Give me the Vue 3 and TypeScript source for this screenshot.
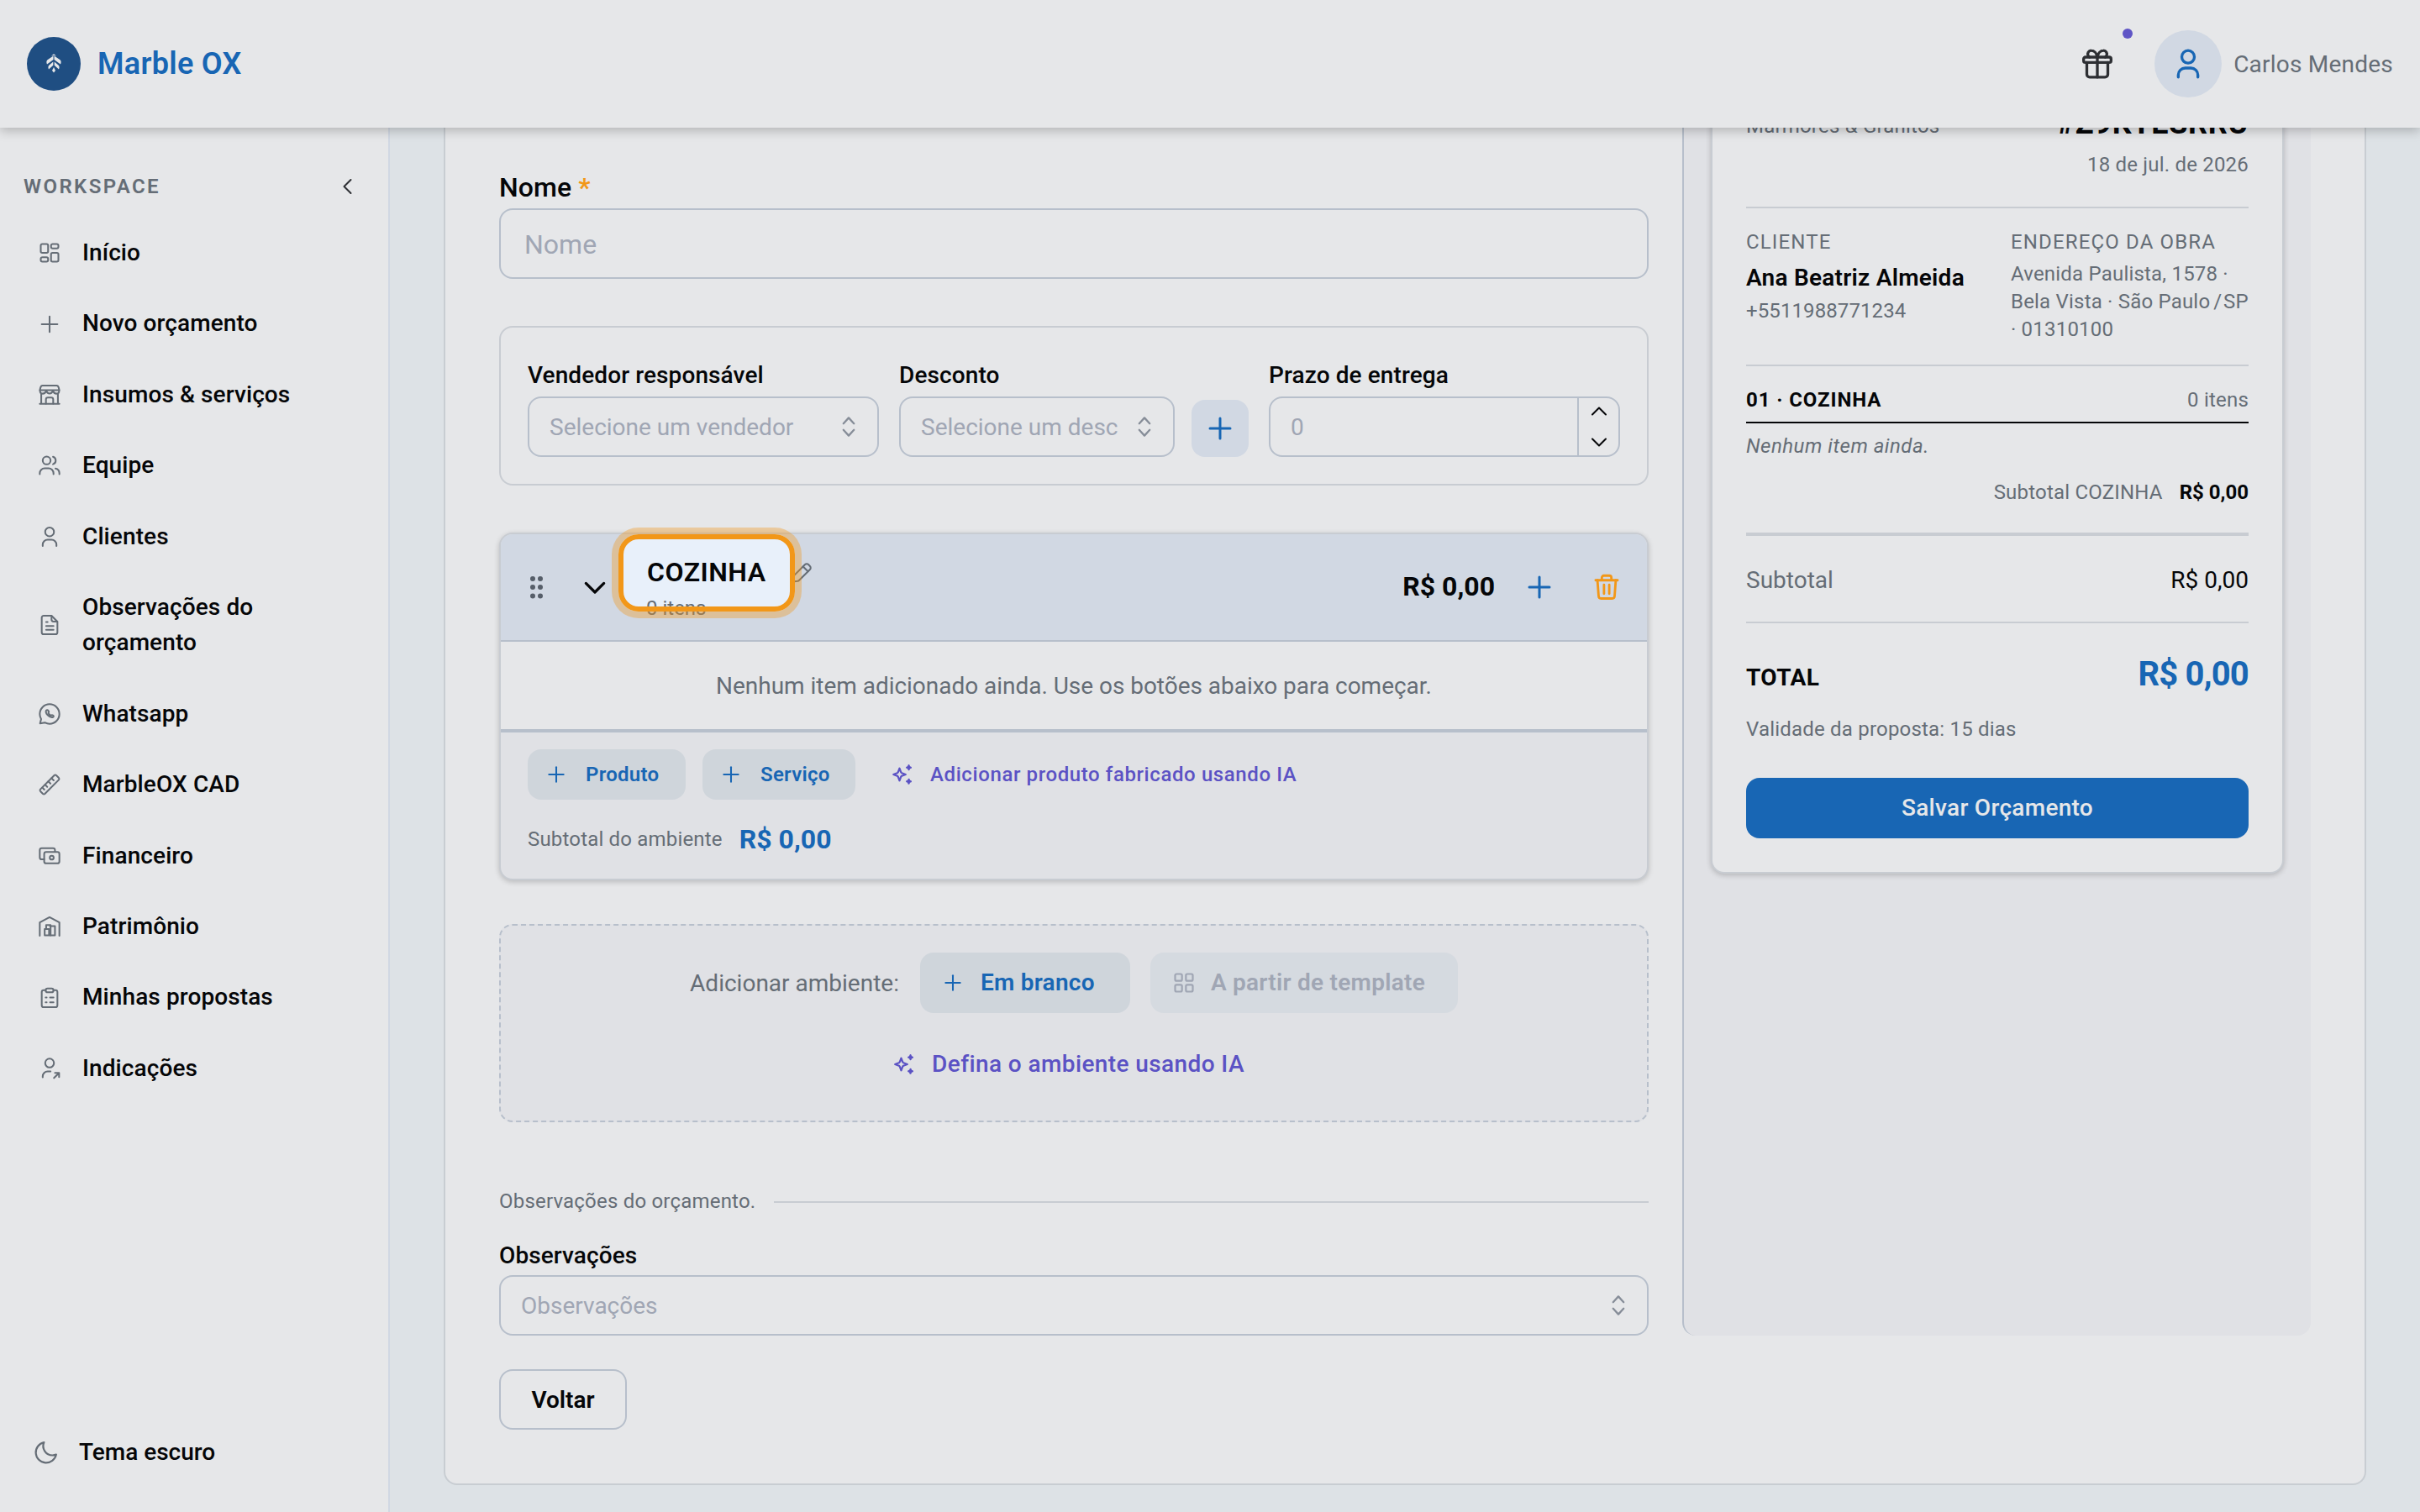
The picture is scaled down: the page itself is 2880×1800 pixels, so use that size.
<script setup lang="ts">
import { h, type FunctionalComponent } from 'vue'

const icons: Record<string, string[]> = {
  dashboard: [
    'M4.5 3h4.5a1.5 1.5 0 0 1 1.5 1.5v6a1.5 1.5 0 0 1-1.5 1.5h-4.5a1.5 1.5 0 0 1-1.5-1.5v-6a1.5 1.5 0 0 1 1.5-1.5z',
    'M15.2 3h4.1a1.7 1.7 0 0 1 1.7 1.7v1.1a1.7 1.7 0 0 1-1.7 1.7h-4.1a1.7 1.7 0 0 1-1.7-1.7v-1.1a1.7 1.7 0 0 1 1.7-1.7z',
    'M4.7 16.5h4.1a1.7 1.7 0 0 1 1.7 1.7v1.1a1.7 1.7 0 0 1-1.7 1.7h-4.1a1.7 1.7 0 0 1-1.7-1.7v-1.1a1.7 1.7 0 0 1 1.7-1.7z',
    'M15 12h4.5a1.5 1.5 0 0 1 1.5 1.5v6a1.5 1.5 0 0 1-1.5 1.5h-4.5a1.5 1.5 0 0 1-1.5-1.5v-6a1.5 1.5 0 0 1 1.5-1.5z',
  ],
  plus: ['M12 4v16', 'M4 12h16'],
  store: [
    'M3.5 11v10M20.5 11v10M2 21.3h20',
    'M4.8 2.5h14.4c1.2 0 1.8 1 2.1 2.2l.6 2.6H2.1l.6-2.6c.3-1.2.9-2.2 2.1-2.2z',
    'M2.2 7.5c0 4.4 5 4.4 6.4.3 1.3 3.8 5.5 3.8 6.8 0 1.4 4.1 6.4 4.1 6.4-.3',
    'M8.3 21v-4.2a2 2 0 0 1 2-2h3.4a2 2 0 0 1 2 2v4.2',
  ],
  users: [
    'M13 7a4 4 0 1 1-8 0 4 4 0 0 1 8 0z',
    'M2 21v-1a5 5 0 0 1 5-5h4a5 5 0 0 1 5 5v1',
    'M15.5 3.2a4 4 0 0 1 0 7.6',
    'M18 15.2a5 5 0 0 1 4 4.8v1',
  ],
  user: ['M16.500 7a4.500 4.500 0 1 1-9 0 4.500 4.500 0 0 1 9 0z', 'M5 21.500v-1.500a5 5 0 0 1 5-5h4a5 5 0 0 1 5 5v1.500'],
  note: [
    'M14 2.500H6a2 2 0 0 0-2 2v15a2 2 0 0 0 2 2h12a2 2 0 0 0 2-2V8.500l-6-6z',
    'M14 2.800v3.700a2 2 0 0 0 2 2h3.700',
    'M8.500 9h1.500M8.500 13h7.500M8.500 17h7.500',
  ],
  whatsapp: [
    'M12 22c5.520 0 10-4.480 10-10S17.520 2 12 2 2 6.480 2 12c0 1.900.5 3.600 1.400 5.100L2.300 21.700l4.800-1C8.600 21.500 10.200 22 12 22z',
    'M8.600 8.300c-.7 1.200-.2 3.100 1.700 5s3.900 2.500 5.200 1.900c.7-.4.800-1.100.3-1.500l-1-.6c-.5-.3-.8 0-1.200.4-.9 0-2.700-1.700-2.800-2.800.4-.4.7-.7.4-1.200l-.7-1c-.5-.7-1.400-.7-1.900-.2z',
  ],
  ruler: ['M16.800 2.600 2.600 16.800a1.500 1.500 0 0 0 0 2l2.600 2.600a1.500 1.500 0 0 0 2 0L21.400 7.200a1.500 1.500 0 0 0 0-2l-2.600-2.600a1.500 1.500 0 0 0-2 0z', 'M14 5.500l2.200 2.200M10.700 8.800l2.200 2.200M7.400 12.100l2.200 2.200M5 15.500l1.600 1.600'],
  cash: [
    'M8.500 8h11.500a2 2 0 0 1 2 2v7.500a2 2 0 0 1-2 2H8.500a2 2 0 0 1-2-2V10a2 2 0 0 1 2-2z',
    'M6.500 15.500H4a2 2 0 0 1-2-2V6a2 2 0 0 1 2-2h11.500a2 2 0 0 1 2 2v1.800',
    'M16.200 13.700a2 2 0 1 1-4 0 2 2 0 0 1 4 0z',
  ],
  warehouse: ['M2 21.500V7.800l10-5.300 10 5.300v13.700', 'M7 21v-6.500h4.500M11.500 21v-6.500M17.500 21v-9.500h-5M7 21h10.500', 'M8.500 14.500v-4h4.500v10.500'],
  clipboard: [
    'M8 4H6a2 2 0 0 0-2 2v13.500a2 2 0 0 0 2 2h12a2 2 0 0 0 2-2V6a2 2 0 0 0-2-2h-2',
    'M10 2.300h4a1.700 1.700 0 0 1 0 4h-4a1.700 1.700 0 0 1 0-4z',
    'M8 11.500h1M12.500 11.500h3.500M8 16.500h1M12.500 16.500h3.500',
  ],
  referral: ['M16.500 6.500a4.500 4.500 0 1 1-9 0 4.500 4.500 0 0 1 9 0z', 'M5 21v-1a5 5 0 0 1 5-5h3', 'M16.500 21.700l5-5M17.500 16.500h4.200v4.200'],
  moon: ['M21.500 14.100A9 9 0 0 1 18 14.800 8.800 8.800 0 0 1 9.900 2.500 9.800 9.800 0 1 0 21.500 14.100z'],
  gift: [
    'M4.500 11v8.500a2 2 0 0 0 2 2h11a2 2 0 0 0 2-2V11',
    'M3.500 7.200h17a1.300 1.300 0 0 1 1.300 1.300v1.200a1.300 1.300 0 0 1-1.300 1.300h-17a1.300 1.300 0 0 1-1.300-1.300V8.500a1.300 1.300 0 0 1 1.300-1.300z',
    'M12 7.200v14.300',
    'M12 7.200C11.500 4.300 9.700 2.500 7.700 2.500a2.500 2.500 0 0 0-2.300 3.600c.2.500.6.900 1 1.100M12 7.200c.5-2.900 2.300-4.700 4.300-4.700a2.500 2.500 0 0 1 2.300 3.600c-.2.500-.6.900-1 1.100',
  ],
  pencil: ['M15.500 3.500 4.300 14.700c-.4.400-.6.900-.7 1.400L3 21l4.900-.6c.5-.1 1-.3 1.400-.7L20.500 8.500a2.400 2.400 0 0 0 0-3.400l-1.600-1.600a2.400 2.400 0 0 0-3.400 0z', 'M13.500 5.500l5 5'],
  trash: [
    'M4.300 6.200l1 13.400a2 2 0 0 0 2 1.900h9.400a2 2 0 0 0 2-1.900l1-13.400',
    'M2.800 6.200h18.400',
    'M8 6V4a1.700 1.700 0 0 1 1.700-1.700h4.600A1.700 1.700 0 0 1 16 4v2',
    'M9.800 10v7.500M14.200 10v7.500',
  ],
  sparkle: [
    'M9 5.800l1.500 3.900c.2.400.4.600.8.800L15.200 12l-3.900 1.500c-.4.200-.6.400-.8.800L9 18.200l-1.500-3.900c-.2-.4-.4-.6-.8-.8L2.800 12l3.900-1.500c.4-.2.600-.4.800-.8z',
    'M18.500 2.800l.5 1.500 1.500.6-1.500.6-.5 1.500-.6-1.500-1.500-.6 1.500-.6z',
    'M18.500 17l.5 1.500 1.500.6-1.500.6-.5 1.500-.6-1.500-1.500-.6 1.500-.6z',
  ],
  grid: [
    'M4.500 3h4a1.500 1.500 0 0 1 1.500 1.500v4a1.500 1.500 0 0 1-1.500 1.500h-4a1.500 1.500 0 0 1-1.500-1.500v-4a1.500 1.500 0 0 1 1.500-1.500z',
    'M15.500 3h4a1.500 1.500 0 0 1 1.500 1.500v4a1.500 1.500 0 0 1-1.500 1.500h-4a1.500 1.500 0 0 1-1.500-1.500v-4a1.500 1.500 0 0 1 1.500-1.500z',
    'M4.500 14h4a1.500 1.500 0 0 1 1.500 1.500v4a1.500 1.500 0 0 1-1.500 1.500h-4a1.500 1.500 0 0 1-1.500-1.500v-4a1.500 1.500 0 0 1 1.500-1.500z',
    'M15.500 14h4a1.500 1.500 0 0 1 1.500 1.500v4a1.500 1.500 0 0 1-1.500 1.500h-4a1.500 1.500 0 0 1-1.500-1.500v-4a1.500 1.500 0 0 1 1.500-1.500z',
  ],
  updown: ['M7 9l5-5.500L17 9', 'M7 15l5 5.500L17 15'],
  down: ['M4 8.500l8 8 8-8'],
  up: ['M4 15.500l8-8 8 8'],
  left: ['M15.500 4l-8 8 8 8'],
}

const Icon: FunctionalComponent<{ name: string; size?: number; weight?: number }> = (props) =>
  h(
    'svg',
    {
      width: props.size ?? 28,
      height: props.size ?? 28,
      viewBox: '0 0 24 24',
      fill: 'none',
      stroke: 'currentColor',
      'stroke-width': props.weight ?? 1.75,
      'stroke-linecap': 'round',
      'stroke-linejoin': 'round',
      style: 'display:block;flex:none',
    },
    (icons[props.name] ?? []).map((d) => h('path', { d })),
  )
Icon.props = ['name', 'size', 'weight']

const nav = [
  { icon: 'dashboard', label: 'Início' },
  { icon: 'plus', label: 'Novo orçamento' },
  { icon: 'store', label: 'Insumos & serviços' },
  { icon: 'users', label: 'Equipe' },
  { icon: 'user', label: 'Clientes' },
  { icon: 'note', label: 'Observações do orçamento' },
  { icon: 'whatsapp', label: 'Whatsapp' },
  { icon: 'ruler', label: 'MarbleOX CAD' },
  { icon: 'cash', label: 'Financeiro' },
  { icon: 'warehouse', label: 'Patrimônio' },
  { icon: 'clipboard', label: 'Minhas propostas' },
  { icon: 'referral', label: 'Indicações' },
]
</script>

<template>
  <div class="app">
    <header class="topbar">
      <div class="brand">
        <span class="logo">
          <svg width="18" height="24" viewBox="0 0 18 24" fill="#e6e7e9">
            <path d="M8.500 3.500V8L1 13.500C0 11.500.2 9.500 1.500 8.300zM9.500 3.500V8l7.500 5.500c1-2 .8-4-.5-5.200z" />
            <path d="M6 3.500 9 1.200l3 2.300L9 2.900z" />
            <path d="M8.300 10.500v4.300L3 19.500c-1-2-.7-3.700.3-4.800zM9.700 10.500v4.300L15 19.500c1-2 .7-3.700-.3-4.800z" />
            <path d="M9 17l2 4-2 2.500L7 21z" />
          </svg>
        </span>
        <span class="brand-name">Marble OX</span>
      </div>
      <div class="account">
        <span class="gift"><Icon name="gift" :size="40" :weight="2" /><i class="dot"></i></span>
        <span class="avatar"><Icon name="user" :size="40" :weight="2" /></span>
        <span class="user-name">Carlos Mendes</span>
      </div>
    </header>

    <div class="body">
      <aside class="sidebar">
        <div class="workspace">
          <span>WORKSPACE</span>
          <Icon name="left" :size="24" :weight="2" class="collapse" />
        </div>
        <nav>
          <a v-for="item in nav" :key="item.label" class="nav-item">
            <Icon :name="item.icon" />
            <span>{{ item.label }}</span>
          </a>
        </nav>
        <div class="theme"><Icon name="moon" :size="30" /><span>Tema escuro</span></div>
      </aside>

      <main class="main">
        <section class="sheet">
          <div class="form">
            <label class="label big">Nome <b class="req">*</b></label>
            <div class="input tall"><span>Nome</span></div>

            <div class="group">
              <div class="field">
                <label class="label">Vendedor responsável</label>
                <div class="input select"><span>Selecione um vendedor</span><Icon name="updown" :size="30" :weight="1.8" /></div>
              </div>
              <div class="field">
                <label class="label">Desconto</label>
                <div class="with-add">
                  <div class="input select"><span>Selecione um desc</span><Icon name="updown" :size="30" :weight="1.8" /></div>
                  <button class="add"><Icon name="plus" :size="36" :weight="2" /></button>
                </div>
              </div>
              <div class="field">
                <label class="label">Prazo de entrega</label>
                <div class="input number">
                  <span>0</span>
                  <div class="steps"><Icon name="up" :size="24" :weight="2" /><Icon name="down" :size="24" :weight="2" /></div>
                </div>
              </div>
            </div>

            <article class="room">
              <header class="room-head">
                <svg class="drag" width="18" height="28" viewBox="0 0 18 28" fill="#565e69">
                  <circle cx="4" cy="4" r="3" /><circle cx="13" cy="4" r="3" />
                  <circle cx="4" cy="14" r="3" /><circle cx="13" cy="14" r="3" />
                  <circle cx="4" cy="24.500" r="3" /><circle cx="13" cy="24.500" r="3" />
                </svg>
                <Icon name="down" :size="32" :weight="2.4" class="fold" />
                <div class="room-title">
                  <div class="spot"></div>
                  <div class="name">COZINHA</div>
                  <div class="count">0 itens</div>
                  <Icon name="pencil" :size="28" class="edit" />
                  <div class="ring"></div>
                </div>
                <span class="room-total">R$&nbsp;0,00</span>
                <Icon name="plus" :size="36" :weight="2" class="room-add" />
                <Icon name="trash" :size="34" :weight="2" class="room-del" />
              </header>
              <p class="empty">Nenhum item adicionado ainda. Use os botões abaixo para começar.</p>
              <footer class="room-foot">
                <div class="actions">
                  <button class="soft small"><Icon name="plus" :size="26" :weight="1.9" />Produto</button>
                  <button class="soft small second"><Icon name="plus" :size="26" :weight="1.9" />Serviço</button>
                  <a class="ai small-ai"><Icon name="sparkle" :size="28" :weight="1.9" />Adicionar produto fabricado usando IA</a>
                </div>
                <div class="room-sub"><span>Subtotal do ambiente</span><b>R$&nbsp;0,00</b></div>
              </footer>
            </article>

            <div class="new-room">
              <div class="new-row">
                <span class="new-label">Adicionar ambiente:</span>
                <button class="soft blank"><Icon name="plus" :size="26" :weight="1.9" />Em branco</button>
                <button class="soft template"><Icon name="grid" :size="28" :weight="1.9" />A partir de template</button>
              </div>
              <a class="ai define"><Icon name="sparkle" :size="28" :weight="1.9" />Defina o ambiente usando IA</a>
            </div>

            <div class="divider"><span>Observações do orçamento.</span><hr /></div>
            <label class="label obs">Observações</label>
            <div class="input select wide"><span>Observações</span><Icon name="updown" :size="30" :weight="1.8" /></div>
            <button class="back">Voltar</button>
          </div>

          <aside class="preview">
            <div class="paper">
              <div class="top"><span>Mármores &amp; Granitos</span><b>#Z9KYESRRU</b></div>
              <div class="date">18 de jul. de 2026</div>
              <div class="parties">
                <div>
                  <div class="cap">CLIENTE</div>
                  <div class="client">Ana Beatriz Almeida</div>
                  <div class="phone">+5511988771234</div>
                </div>
                <div>
                  <div class="cap">ENDEREÇO DA OBRA</div>
                  <div class="address">
                    Avenida Paulista, 1578 ·<br />Bela Vista · São Paulo<span class="slash"> / </span>SP<br />· 01310100
                  </div>
                </div>
              </div>
              <div class="env"><b>01 · COZINHA</b><span>0 itens</span></div>
              <div class="none">Nenhum item ainda.</div>
              <div class="env-sub"><span>Subtotal COZINHA</span><b>R$&nbsp;0,00</b></div>
              <div class="sub"><span>Subtotal</span><em>R$&nbsp;0,00</em></div>
              <div class="total"><b>TOTAL</b><strong>R$&nbsp;0,00</strong></div>
              <div class="valid">Validade da proposta: 15 dias</div>
              <button class="save">Salvar Orçamento</button>
            </div>
          </aside>
        </section>
      </main>
    </div>
  </div>
</template>

<style>
body {
  margin: 0;
  background: #dde2e6;
}
</style>

<style scoped>
* {
  box-sizing: border-box;
}
.app {
  width: 2880px;
  height: 1800px;
  overflow: hidden;
  display: flex;
  flex-direction: column;
  background: #dde2e6;
  color: #050608;
  font-family: Roboto, 'Liberation Sans', sans-serif;
  font-size: 28px;
  line-height: 40px;
}
button {
  font: inherit;
  border: 0;
  margin: 0;
  padding: 0;
}
.topbar {
  position: relative;
  z-index: 2;
  height: 152px;
  flex: none;
  display: flex;
  align-items: center;
  justify-content: space-between;
  padding: 0 32px;
  background: #e6e7e9;
  box-shadow: 0 4px 12px rgba(0, 0, 0, 0.22);
}
.brand,
.account {
  display: flex;
  align-items: center;
}
.logo {
  width: 64px;
  height: 64px;
  border-radius: 50%;
  background: #1f4e82;
  display: flex;
  align-items: center;
  justify-content: center;
}
.logo svg {
  margin-bottom: 2px;
}
.brand-name {
  margin-left: 20px;
  font-size: 36px;
  font-weight: 600;
  letter-spacing: 0.3px;
  color: #1866b4;
}
.gift {
  position: relative;
  color: #2d2f33;
}
.dot {
  position: absolute;
  left: 50px;
  top: -22px;
  width: 12px;
  height: 12px;
  border-radius: 50%;
  background: #5f55c6;
}
.avatar {
  width: 80px;
  height: 80px;
  margin: 0 14px 0 48px;
  border-radius: 50%;
  background: #d1d8e3;
  color: #1866b4;
  display: flex;
  align-items: center;
  justify-content: center;
}
.user-name {
  padding-top: 2px;
  letter-spacing: 0.22px;
  color: #656d76;
}
.body {
  display: flex;
  height: 1648px;
}
.sidebar {
  width: 464px;
  flex: none;
  display: flex;
  flex-direction: column;
  background: #e6e7e9;
  border-right: 2px solid #d1d8e3;
}
.workspace {
  height: 40px;
  margin-top: 50px;
  padding: 0 36px 0 28px;
  display: flex;
  align-items: center;
  justify-content: space-between;
  font-size: 24px;
  font-weight: 600;
  letter-spacing: 2.4px;
  color: #656d76;
}
.collapse {
  color: #2d2f33;
}
nav {
  margin-top: 17px;
}
.nav-item {
  display: flex;
  align-items: center;
  gap: 25px;
  padding: 21px 45px;
  line-height: 42.4px;
  font-weight: 500;
  letter-spacing: 0.1px;
}
.nav-item span {
  width: 260px;
}
.nav-item svg,
.theme svg {
  color: #656d76;
}
.theme {
  margin: auto 0 51px 40px;
  display: flex;
  align-items: center;
  gap: 24px;
  font-weight: 500;
}
.main {
  flex: 1;
  padding: 0 64px 32px;
}
.sheet {
  height: 1616px;
  padding: 0 64px;
  display: flex;
  gap: 40px;
  background: #e6e7e9;
  border: 2px solid #c8cdd2;
  border-top: 0;
  border-radius: 0 0 16px 16px;
}
.form {
  width: 1368px;
  flex: none;
  padding-top: 51px;
}
.label {
  display: block;
  font-weight: 500;
  line-height: 40px;
  margin-bottom: 5px;
  letter-spacing: 0.1px;
}
.label.big {
  font-size: 32px;
}
.req {
  color: #f29718;
  font-weight: 600;
}
.input {
  height: 72px;
  border: 2px solid #b7bfcb;
  border-radius: 16px;
  display: flex;
  align-items: center;
  color: #a0a6b4;
}
.input > span {
  padding-top: 2px;
}
.tall {
  height: 84px;
  padding: 0 28px;
  font-size: 32px;
}
.select {
  padding: 0 19px 0 24px;
  justify-content: space-between;
}
.select svg {
  color: #868d98;
}
.group {
  margin-top: 56px;
  height: 190px;
  border: 2px solid #c8ccd2;
  border-radius: 16px;
  padding: 37px 32px 0;
  display: grid;
  grid-template-columns: 418px 416px 418px;
  gap: 24px;
}
.with-add {
  display: flex;
  align-items: flex-end;
  gap: 20px;
}
.with-add .input {
  flex: 1;
  white-space: nowrap;
}
.add {
  width: 68px;
  height: 68px;
  border-radius: 16px;
  background: #d1d8e3;
  color: #1866b4;
  display: flex;
  align-items: center;
  justify-content: center;
}
.number {
  padding-left: 24px;
  justify-content: space-between;
}
.steps {
  width: 49px;
  height: 100%;
  border-left: 2px solid #b7bfcb;
  color: #050608;
  display: flex;
  flex-direction: column;
  align-items: center;
  justify-content: center;
  gap: 12px;
}
.room {
  margin-top: 56px;
  height: 414px;
  border: 2px solid #c8ccd2;
  border-radius: 16px;
  background: #e0e1e5;
  box-shadow: 0 2px 6px rgba(0, 0, 0, 0.2);
}
.room-head {
  height: 128px;
  padding: 0 31px 0 34px;
  display: flex;
  align-items: center;
  background: #d1d8e3;
  border-bottom: 2px solid #b7bfcb;
  border-radius: 14px 14px 0 0;
}
.drag {
  margin-right: 44px;
}
.room-title {
  position: relative;
  width: 300px;
  height: 126px;
  margin-left: 46px;
  padding-top: 25px;
}
.spot,
.ring {
  position: absolute;
  left: -34px;
  top: 0;
  width: 210px;
  height: 92px;
  border-radius: 24px;
}
.spot {
  background: #e8f0fa;
}
.ring {
  border: 6px solid #f29718;
  box-shadow: 0 0 0 8px rgba(242, 151, 24, 0.36);
}
.name {
  position: relative;
  font-size: 32px;
  font-weight: 600;
  line-height: 40px;
  letter-spacing: 0.5px;
}
.count {
  position: relative;
  margin: 7px 0 0 -1px;
  font-size: 24px;
  line-height: 32px;
  color: #656d76;
}
.edit {
  position: absolute;
  left: 170px;
  top: 32px;
  color: #656d76;
}
.room-total {
  margin-left: auto;
  margin-right: 35px;
  padding-bottom: 3px;
  font-size: 32px;
  font-weight: 700;
}
.room-add {
  color: #1866b4;
  margin-right: 45px;
}
.room-del {
  color: #f29718;
}
.empty {
  margin: 0;
  height: 108px;
  line-height: 106px;
  background: #e6e7e9;
  border-bottom: 4px solid #b7bfcb;
  text-align: center;
  color: #656d76;
  letter-spacing: -0.03px;
}
.room-foot {
  padding: 20px 32px 0;
}
.actions {
  display: flex;
  gap: 20px;
  align-items: center;
}
.soft {
  display: flex;
  align-items: center;
  height: 72px;
  border-radius: 16px;
  background: #cfd5db;
  color: #1866b4;
  font-weight: 600;
  letter-spacing: 0.25px;
}
.soft.small {
  width: 188px;
  height: 60px;
  padding-left: 21px;
  gap: 22px;
  font-size: 24px;
}
.soft.second {
  width: 182px;
}
.ai {
  display: flex;
  align-items: center;
  gap: 19px;
  color: #5b52c4;
  font-weight: 500;
  letter-spacing: 0.4px;
}
.small-ai {
  margin-left: 22px;
  font-size: 24px;
  letter-spacing: 0.6px;
}
.define {
  margin-right: 13px;
}
.room-sub {
  margin-top: 27px;
  display: flex;
  align-items: center;
  gap: 20px;
  font-size: 24px;
  letter-spacing: 0.18px;
  color: #656d76;
}
.room-sub b {
  font-size: 32px;
  letter-spacing: 0;
  color: #1866b4;
}
.new-room {
  margin-top: 52px;
  height: 236px;
  border: 2px dashed #b7bfcb;
  border-radius: 16px;
  background: #e0e1e5;
  padding-top: 32px;
  display: flex;
  flex-direction: column;
  align-items: center;
  gap: 41px;
}
.new-row {
  display: flex;
  align-items: center;
}
.new-label {
  padding-top: 2px;
  color: #656d76;
  margin-right: 25px;
}
.blank {
  width: 250px;
  padding-left: 26px;
  gap: 20px;
  margin-right: 24px;
}
.template {
  width: 366px;
  padding-left: 26px;
  gap: 18px;
  background: #d5dae0;
  color: #a0a6b4;
}
.divider {
  margin-top: 74px;
  display: flex;
  align-items: center;
  gap: 22px;
  font-size: 24px;
  letter-spacing: 0.2px;
  color: #656d76;
}
.divider hr {
  flex: 1;
  margin: 2px 0 0;
  border: 0;
  height: 2px;
  background: #c8ccd2;
}
.obs {
  margin-top: 25px;
  margin-bottom: 3px;
}
.wide {
  padding-right: 19px;
}
.back {
  margin-top: 40px;
  width: 152px;
  height: 72px;
  padding-top: 2px;
  border: 2px solid #b7bfcb;
  border-radius: 16px;
  background: transparent;
  color: #050608;
  font-weight: 600;
}
.preview {
  width: 748px;
  height: 1438px;
  padding: 0 32px;
  overflow: hidden;
  background: #e0e1e5;
  border-left: 2px solid #b7bfcb;
  border-radius: 0 0 16px 16px;
}
.paper {
  margin-top: -24px;
  height: 912px;
  border: 2px solid #c8ccd2;
  border-radius: 0 0 16px 16px;
  box-shadow: 0 2px 6px rgba(0, 0, 0, 0.2);
  background: #e6e7e9;
  padding: 0 40px;
  font-size: 24px;
  letter-spacing: 0.2px;
  color: #656d76;
}
.top {
  height: 40px;
  display: flex;
  justify-content: space-between;
  align-items: center;
}
.top b {
  font-size: 36px;
  line-height: 36px;
  margin-top: -6px;
  letter-spacing: 0.7px;
  color: #050608;
}
.date {
  margin-top: 6px;
  height: 72px;
  text-align: right;
  border-bottom: 2px solid #c8ccd2;
}
.parties {
  height: 188px;
  padding-top: 24px;
  display: grid;
  grid-template-columns: 283px 283px;
  gap: 32px;
  border-bottom: 2px solid #c8ccd2;
}
.cap {
  line-height: 32px;
  letter-spacing: 1.15px;
}
.client {
  margin-top: 7px;
  font-size: 28px;
  font-weight: 600;
  letter-spacing: 0.25px;
  color: #050608;
}
.phone {
  margin-top: -1px;
  letter-spacing: 0.1px;
  white-space: nowrap;
}
.address {
  margin-top: 6px;
  line-height: 33px;
  white-space: nowrap;
}
.slash {
  letter-spacing: -2px;
}
.env {
  height: 68px;
  padding-top: 20px;
  display: flex;
  justify-content: space-between;
  border-bottom: 2px solid #050608;
}
.env b {
  letter-spacing: 0.9px;
}
.env b,
.env-sub b {
  color: #050608;
}
.env-sub b {
  letter-spacing: 0;
}
.none {
  margin-top: 7px;
  font-style: italic;
  letter-spacing: 0.5px;
}
.env-sub {
  margin-top: 15px;
  height: 72px;
  display: flex;
  justify-content: flex-end;
  gap: 20px;
  border-bottom: 4px solid #c8ccd2;
}
.sub {
  height: 104px;
  padding-top: 33px;
  display: flex;
  justify-content: space-between;
  font-size: 28px;
  letter-spacing: 0;
  border-bottom: 2px solid #c8ccd2;
}
.sub em {
  font-style: normal;
  color: #050608;
}
.total {
  height: 84px;
  padding-top: 41px;
  display: flex;
  justify-content: space-between;
  align-items: baseline;
  font-size: 28px;
  letter-spacing: 0.4px;
  color: #050608;
}
.total strong {
  font-size: 40px;
  letter-spacing: -0.8px;
  color: #1866b4;
}
.valid {
  margin-top: 22px;
}
.save {
  margin-top: 38px;
  width: 100%;
  height: 72px;
  border-radius: 16px;
  background: #1866b4;
  color: #e6e7e9;
  font-size: 28px;
  font-weight: 500;
  letter-spacing: 0.3px;
}
</style>
